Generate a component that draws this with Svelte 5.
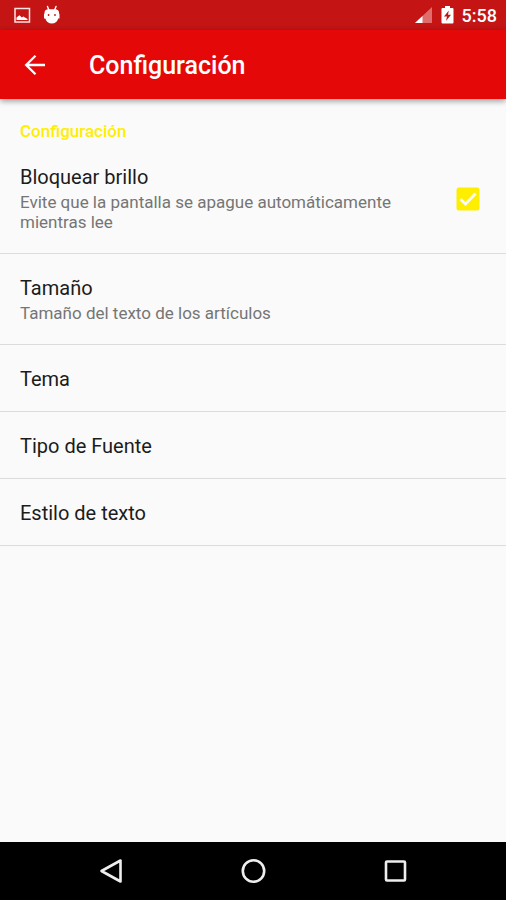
<script lang="ts">
    interface Setting {
        title: string;
        summary?: string;
    }

    const SETTINGS: Setting[] = [
        { title: 'Tamaño', summary: 'Tamaño del texto de los artículos' },
        { title: 'Tema' },
        { title: 'Tipo de Fuente' },
        { title: 'Estilo de texto' },
    ];

    let keepBright = $state(true);
</script>

<div class="screen">
    <div class="status">
        <div class="group">
            <svg width="18" height="18" viewBox="0 0 18 18">
                <rect x="2" y="2.5" width="14.5" height="13.5" fill="none" stroke="#fbe4e4" stroke-width="1.5" />
                <path d="M3.5 14v-2.500l3-2.300 2.300 2.200 1.500-1 4.200 2.600v1z" fill="#fff" />
            </svg>
            <svg width="18" height="20" viewBox="0 0 18 20">
                <path d="M4.5 1.5l1.500 4M13 1.5l-1.500 4" stroke="#fff" stroke-width="1.4" stroke-linecap="round" />
                <path d="M1.5 8Q1.5 4.3 5.5 4.3H12Q16 4.3 16 8l.5 1.5v4h-1.2Q13.600 18.5 8.800 18.5T2.300 13.5H1v-4z" fill="#fff" />
                <circle cx="5.6" cy="10" r="0.9" fill="#c41414" />
                <circle cx="12" cy="10" r="0.9" fill="#c41414" />
            </svg>
        </div>
        <div class="group right">
            <svg width="19" height="18" viewBox="0 0 19 18">
                <path d="M18 1v16H1z" fill="#e06c6c" />
                <path d="M8.5 10v7H1z" fill="#fff" />
            </svg>
            <svg width="13" height="20" viewBox="0 0 13 20">
                <path d="M4 1h5v2h2.5q1 0 1 1v13.5q0 1-1 1h-10q-1 0-1-1V4q0-1 1-1H4z" fill="#fff" />
                <path d="M7.8 5.5L3 11.5h3L5 16l5-6.3H7z" fill="#c41414" />
            </svg>
            <span class="clock">5:58</span>
        </div>
    </div>

    <header>
        <button class="back" aria-label="Atrás">
            <svg width="22" height="22" viewBox="0 0 22 22" fill="none" stroke="#fff" stroke-width="2.3">
                <path d="M21 11H2.5M11.5 1.7L2.2 11l9.3 9.3" />
            </svg>
        </button>
        <h1>Configuración</h1>
    </header>

    <main>
        <h2>Configuración</h2>
        <label class="row">
            <span class="text">
                <span class="title">Bloquear brillo</span>
                <span class="summary">Evite que la pantalla se apague automáticamente mientras lee</span>
            </span>
            <input type="checkbox" bind:checked={keepBright} />
            <svg class="box" class:off={!keepBright} width="24" height="24" viewBox="0 0 24 24">
                <rect class="fill" x="0.5" y="0.5" width="23" height="23" rx="2.5" />
                {#if keepBright}
                    <path d="M4.5 12l5 5 10-10.500" fill="none" stroke="#fafafa" stroke-width="2.8" />
                {/if}
            </svg>
        </label>
        {#each SETTINGS as item}
            <button class="row">
                <span class="text">
                    <span class="title">{item.title}</span>
                    {#if item.summary}
                        <span class="summary">{item.summary}</span>
                    {/if}
                </span>
            </button>
        {/each}
    </main>

    <nav>
        <button aria-label="Volver">
            <svg width="24" height="26" viewBox="0 0 24 26" fill="none" stroke="#eee" stroke-width="2.6">
                <path d="M21.5 2.5v21L2.5 13z" stroke-linejoin="round" />
            </svg>
        </button>
        <button aria-label="Inicio">
            <svg width="26" height="26" viewBox="0 0 26 26" fill="none" stroke="#eee" stroke-width="2.6">
                <circle cx="13.5" cy="13" r="10.7" />
            </svg>
        </button>
        <button aria-label="Recientes">
            <svg width="24" height="24" viewBox="0 0 24 24" fill="none" stroke="#eee" stroke-width="2.6">
                <rect x="3" y="2.5" width="19" height="19" rx="1" />
            </svg>
        </button>
    </nav>
</div>

<style>
    :global(body) {
        background: #fafafa;
    }

    .screen {
        display: flex;
        flex-direction: column;
        min-height: 100vh;
        background: #fafafa;
        font-family: Roboto, sans-serif;
    }

    svg {
        display: block;
        flex: none;
    }

    button {
        padding: 0;
        border: 0;
        background: none;
        font: inherit;
        text-align: left;
        cursor: pointer;
    }

    .status {
        display: flex;
        justify-content: space-between;
        align-items: center;
        height: 30px;
        padding: 0 9px 0 13px;
        background: #c41414;
    }

    .group {
        display: flex;
        align-items: center;
        gap: 12px;
    }

    .group.right {
        gap: 8px;
    }

    .clock {
        color: #fff;
        font-size: 18px;
        font-weight: 500;
    }

    header {
        display: flex;
        align-items: center;
        height: 69px;
        padding-left: 24px;
        gap: 43px;
        background: #e50808;
        box-shadow: 0 2px 6px rgba(0, 0, 0, 0.4);
    }

    h1 {
        margin: 0;
        padding-top: 2px;
        color: #fff;
        font-size: 25px;
        font-weight: 500;
    }

    main {
        flex: 1;
    }

    h2 {
        margin: 0;
        padding: 20px 20px 0;
        color: #ffee00;
        font-size: 17px;
        font-weight: 500;
        line-height: 24px;
    }

    .row {
        display: flex;
        align-items: center;
        box-sizing: border-box;
        width: 100%;
        padding: 22px 26px 20px 20px;
        border-bottom: 1px solid #dcdcdc;
        position: relative;
        cursor: pointer;
    }

    .text {
        display: flex;
        flex: 1;
        flex-direction: column;
        gap: 3px;
    }

    .title {
        color: #1c1c1c;
        font-size: 20px;
        line-height: 24px;
    }

    .summary {
        max-width: 400px;
        padding-bottom: 1px;
        color: #757575;
        font-size: 17px;
        line-height: 20px;
    }

    input {
        position: absolute;
        right: 26px;
        width: 24px;
        height: 24px;
        margin: 0;
        opacity: 0;
    }

    .fill {
        fill: #ffee00;
    }

    .off .fill {
        fill: none;
        stroke: #757575;
        stroke-width: 2;
    }

    nav {
        display: flex;
        justify-content: center;
        align-items: center;
        height: 58px;
        background: #000;
    }

    nav button {
        display: flex;
        justify-content: center;
        width: 28%;
    }
</style>
